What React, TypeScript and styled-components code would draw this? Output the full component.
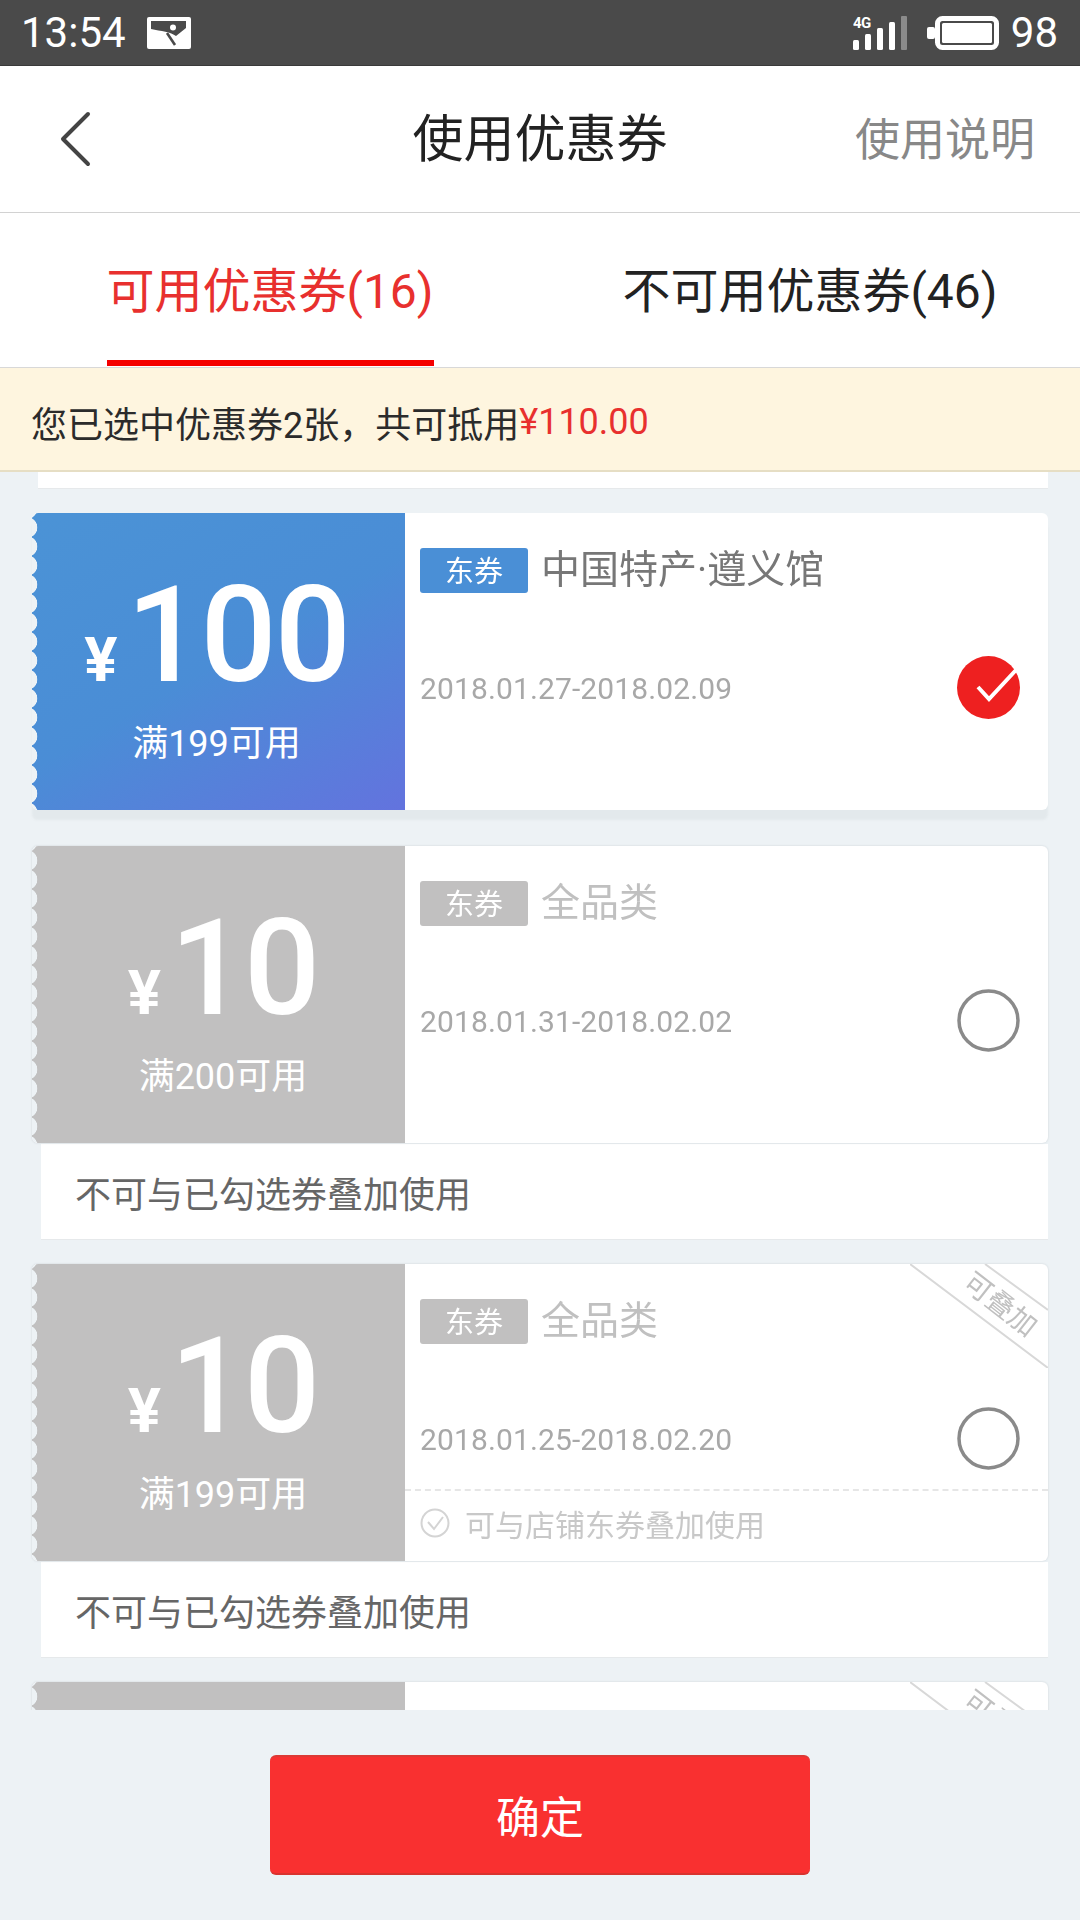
import React from "react";
import styled, { createGlobalStyle } from "styled-components";

const Global = createGlobalStyle`
  html, body { margin: 0; padding: 0; background: #edf2f5; }
  * { box-sizing: border-box; }
  body { font-family: Roboto, "Noto Sans CJK SC", sans-serif; }
`;

const Page = styled.div`
  width: 1080px;
  height: 1920px;
  display: flex;
  flex-direction: column;
  overflow: hidden;
  background: #edf2f5;
`;

const StatusBar = styled.div`
  height: 66px;
  flex: none;
  display: flex;
  align-items: center;
  justify-content: space-between;
  padding: 0 22px 0 21px;
  background: #4a4a4a;
  border-bottom: 1px solid #3a3a3a;
  color: #fff;
  font-size: 42px;
  line-height: 1;
`;

const StatusGroup = styled.div<{ $gap: number }>`
  display: flex;
  align-items: center;
  gap: ${(p) => p.$gap}px;
`;

const SignalSlot = styled.div`
  margin-right: 8px;
  display: flex;
`;

const Header = styled.header`
  height: 147px;
  flex: none;
  display: grid;
  grid-template-columns: 1fr auto 1fr;
  align-items: center;
  background: #fff;
  border-bottom: 1px solid #d2d2d2;
`;

const BackButton = styled.div`
  padding: 0 0 0 58px;
  display: flex;
`;

const Title = styled.h1`
  margin: 0;
  font-size: 51px;
  font-weight: 400;
  color: #222;
  line-height: 1;
`;

const HelpLink = styled.div`
  justify-self: end;
  padding: 2px 45px 0 0;
  font-size: 45px;
  color: #888;
  line-height: 1;
`;

const Tabs = styled.nav`
  height: 155px;
  flex: none;
  display: grid;
  grid-template-columns: 1fr 1fr;
  justify-items: center;
  padding-bottom: 1px;
  background: #fff;
  border-bottom: 1px solid #d8d8d8;
`;

const Tab = styled.div<{ $active?: boolean }>`
  display: flex;
  align-items: center;
  justify-content: center;
  white-space: nowrap;
  width: ${(p) => (p.$active ? "327px" : "auto")};
  padding-top: 11px;
  font-size: 48px;
  line-height: 1;
  color: ${(p) => (p.$active ? "#e8302e" : "#222")};
  border-bottom: 6px solid ${(p) => (p.$active ? "#f50000" : "transparent")};
`;

const Notice = styled.div`
  height: 104px;
  flex: none;
  display: flex;
  align-items: center;
  padding: 6px 0 0 31px;
  background: #fef5df;
  border-bottom: 2px solid #e6dec4;
  font-size: 36px;
  color: #2b2b2b;
`;

const Amount = styled.span`
  color: #e8302e;
`;

const List = styled.div`
  height: 1238px;
  flex: none;
  overflow: hidden;
  padding: 0 32px;
`;

const Note = styled.div<{ $stub?: boolean }>`
  margin: ${(p) => (p.$stub ? 0 : 1)}px 0 0 ${(p) => (p.$stub ? 6 : 9)}px;
  height: ${(p) => (p.$stub ? 17 : 96)}px;
  display: flex;
  align-items: center;
  padding-left: 34px;
  background: #fff;
  border-bottom: 1px solid #e6e9eb;
  font-size: 36px;
  color: #666;
`;

const CardWrap = styled.section`
  margin-top: 24px;
`;

const Card = styled.div`
  position: relative;
  height: 297px;
  width: 1016px;
  display: grid;
  grid-template-columns: 373px 1fr;
  overflow: hidden;
  border-radius: 6px;
  background: #fff;
`;

const CardShadow = styled.div<{ $lifted?: boolean }>`
  padding-bottom: ${(p) => (p.$lifted ? 12 : 0)}px;
  filter: ${(p) =>
    p.$lifted
      ? "drop-shadow(0 10px 1px rgba(60, 70, 80, 0.05))"
      : "drop-shadow(0 0 1px rgba(60, 70, 80, 0.16))"};
`;

const Stub = styled.div<{ $active?: boolean }>`
  position: relative;
  display: flex;
  flex-direction: column;
  align-items: center;
  padding: 0 ${(p) => (p.$active ? 4 : 0)}px 0 ${(p) => (p.$active ? 0 : 9)}px;
  color: #fff;
  background: ${(p) =>
    p.$active
      ? "linear-gradient(150deg, #4b93d6 0%, #4a8dd6 50%, #6373de 100%)"
      : "#c1c0c0"};
  &::before {
    content: "";
    position: absolute;
    left: 0;
    top: 0;
    bottom: 0;
    width: 6px;
    background: radial-gradient(circle at -5px 50%, #edf2f5 10px, transparent 10.6px) 0 5px / 6px 19px repeat-y;
  }
`;

const Price = styled.div`
  display: flex;
  align-items: baseline;
  margin-top: 55px;
  height: 135px;
  font-weight: 500;
`;

const Currency = styled.span`
  font-size: 62px;
  font-weight: 700;
  margin-right: 9px;
  line-height: 135px;
`;

const Value = styled.span`
  font-size: 134px;
  line-height: 135px;
  letter-spacing: -2px;
`;

const Condition = styled.div`
  margin-top: 21px;
  font-size: 36px;
  line-height: 40px;
`;

const Body = styled.div`
  display: flex;
  flex-direction: column;
`;

const TitleRow = styled.div`
  display: flex;
  align-items: center;
  gap: 13px;
  margin: 35px 0 0 15px;
  height: 45px;
`;

const Tag = styled.span<{ $active?: boolean }>`
  width: 108px;
  height: 45px;
  display: flex;
  align-items: center;
  justify-content: center;
  padding-bottom: 3px;
  border-radius: 3px;
  font-size: 29px;
  color: #fff;
  background: ${(p) => (p.$active ? "#4a8fd6" : "#c1c0c0")};
`;

const Scope = styled.span<{ $active?: boolean }>`
  font-size: 39px;
  line-height: 45px;
  color: ${(p) => (p.$active ? "#777" : "#c0c0c0")};
`;

const DateRow = styled.div`
  display: flex;
  align-items: center;
  justify-content: space-between;
  margin: 63px 28px 0 15px;
  height: 63px;
`;

const DateText = styled.span`
  padding-top: 2px;
  font-size: 30px;
  letter-spacing: 0.12px;
  color: #a8a8a8;
`;

const Stack = styled.div`
  margin-top: 19px;
  height: 72px;
  border-top: 2px dashed #e6e6e6;
  display: flex;
  align-items: center;
  gap: 15px;
  padding: 0 0 6px 15px;
  font-size: 30px;
  color: #c8c8c8;
`;

const Ribbon = styled.div`
  position: absolute;
  top: 0;
  right: 0;
  width: 138px;
  height: 104px;
`;

const RibbonText = styled.span`
  position: absolute;
  left: 40px;
  top: 26px;
  width: 100px;
  text-align: center;
  font-size: 28px;
  line-height: 30px;
  color: #c0c0c0;
  transform: rotate(38deg);
`;

const Footer = styled.div`
  flex: 1;
  display: flex;
  align-items: center;
  justify-content: center;
`;

const Confirm = styled.button`
  width: 540px;
  height: 120px;
  border: 0;
  border-top: 2px solid #dc3a35;
  border-bottom: 2px solid #d9332f;
  border-radius: 6px;
  background: #f93030;
  color: #fff;
  font-family: inherit;
  font-size: 44px;
`;

const ImageIcon = () => (
  <svg width="44" height="32" viewBox="0 0 44 32">
    <rect width="44" height="32" rx="2" fill="#fff" />
    <path d="M4 4H39V11L29 19C24 15 14 14 4 12Z" fill="#4a4a4a" />
    <path d="M20 16L28 28" stroke="#4a4a4a" strokeWidth="2.6" fill="none" />
    <circle cx="26" cy="10.5" r="3" fill="#fff" />
  </svg>
);

const SignalIcon = () => (
  <svg width="54" height="34" viewBox="0 0 54 34">
    <text x="0" y="12" fontSize="15" fontWeight="700" letterSpacing="-0.5" fill="#fff" fontFamily="Roboto, sans-serif">4G</text>
    <rect x="0" y="24" width="6" height="10" rx="1.5" fill="#fff" />
    <rect x="12" y="18" width="6" height="16" rx="1.5" fill="#fff" />
    <rect x="24" y="12" width="6" height="22" rx="1.5" fill="#fff" />
    <rect x="36" y="6" width="6" height="28" rx="1.5" fill="#fff" />
    <rect x="48" y="0" width="6" height="34" rx="1" fill="#8b8b8b" />
  </svg>
);

const BatteryIcon = () => (
  <svg width="72" height="34" viewBox="0 0 72 34">
    <rect x="0" y="11" width="8" height="12" rx="2" fill="#fff" />
    <rect x="10.5" y="2.5" width="59" height="29" rx="5" fill="#4a4a4a" stroke="#fff" strokeWidth="5" />
    <rect x="15" y="7" width="50" height="20" rx="1.5" fill="#fff" />
  </svg>
);

const BackIcon = () => (
  <svg width="34" height="56" viewBox="0 0 34 56">
    <path d="M30 3L5 28l25 25" fill="none" stroke="#444" strokeWidth="4" strokeLinecap="round" strokeLinejoin="round" />
  </svg>
);

const Radio = ({ checked }: { checked?: boolean }) => (
  <svg width="63" height="63" viewBox="0 0 63 63">
    {checked ? (
      <>
        <circle cx="31.5" cy="31.5" r="31.5" fill="#ee2020" />
        <path d="M21 31L32 43L59 14" fill="none" stroke="#fff" strokeWidth="4" />
      </>
    ) : (
      <circle cx="31.5" cy="31.5" r="29.5" fill="#fff" stroke="#8a8a8a" strokeWidth="3.5" />
    )}
  </svg>
);

const SmallCheck = () => (
  <svg width="30" height="30" viewBox="0 0 30 30">
    <circle cx="15" cy="15" r="13.5" fill="none" stroke="#d4d4d4" strokeWidth="2" />
    <path d="M8 14l6 7 9-12" fill="none" stroke="#d4d4d4" strokeWidth="2" />
  </svg>
);

const RibbonLines = () => (
  <svg width="138" height="104" viewBox="0 0 138 104">
    <path d="M0 0L138 104M75 0L138 46" stroke="#d8d8d8" strokeWidth="2" fill="none" />
  </svg>
);

type Coupon = {
  value: string;
  condition: string;
  scope: string;
  date: string;
  active?: boolean;
  stackable?: boolean;
  note?: boolean;
};

const coupons: Coupon[] = [
  { value: "100", condition: "满199可用", scope: "中国特产·遵义馆", date: "2018.01.27-2018.02.09", active: true },
  { value: "10", condition: "满200可用", scope: "全品类", date: "2018.01.31-2018.02.02", note: true },
  { value: "10", condition: "满199可用", scope: "全品类", date: "2018.01.25-2018.02.20", stackable: true, note: true },
  { value: "10", condition: "满199可用", scope: "全品类", date: "2018.01.25-2018.02.20", stackable: true, note: true },
];

export default function App() {
  return (
    <Page>
      <Global />
      <StatusBar>
        <StatusGroup $gap={21}>
          <span>13:54</span>
          <ImageIcon />
        </StatusGroup>
        <StatusGroup $gap={12}>
          <SignalSlot>
            <SignalIcon />
          </SignalSlot>
          <BatteryIcon />
          <span>98</span>
        </StatusGroup>
      </StatusBar>

      <Header>
        <BackButton>
          <BackIcon />
        </BackButton>
        <Title>使用优惠券</Title>
        <HelpLink>使用说明</HelpLink>
      </Header>

      <Tabs>
        <Tab $active>可用优惠券(16)</Tab>
        <Tab>不可用优惠券(46)</Tab>
      </Tabs>

      <Notice>
        您已选中优惠券2张，共可抵用<Amount>¥110.00</Amount>
      </Notice>

      <List>
        <Note $stub />
        {coupons.map((c, i) => (
          <CardWrap key={i}>
            <CardShadow $lifted={c.active}>
              <Card>
                <Stub $active={c.active}>
                  <Price>
                    <Currency>¥</Currency>
                    <Value>{c.value}</Value>
                  </Price>
                  <Condition>{c.condition}</Condition>
                </Stub>
                <Body>
                  <TitleRow>
                    <Tag $active={c.active}>东券</Tag>
                    <Scope $active={c.active}>{c.scope}</Scope>
                  </TitleRow>
                  <DateRow>
                    <DateText>{c.date}</DateText>
                    <Radio checked={c.active} />
                  </DateRow>
                  {c.stackable && (
                    <Stack>
                      <SmallCheck />
                      可与店铺东券叠加使用
                    </Stack>
                  )}
                </Body>
                {c.stackable && (
                  <Ribbon>
                    <RibbonLines />
                    <RibbonText>可叠加</RibbonText>
                  </Ribbon>
                )}
              </Card>
            </CardShadow>
            {c.note && <Note>不可与已勾选券叠加使用</Note>}
          </CardWrap>
        ))}
      </List>

      <Footer>
        <Confirm>确定</Confirm>
      </Footer>
    </Page>
  );
}
